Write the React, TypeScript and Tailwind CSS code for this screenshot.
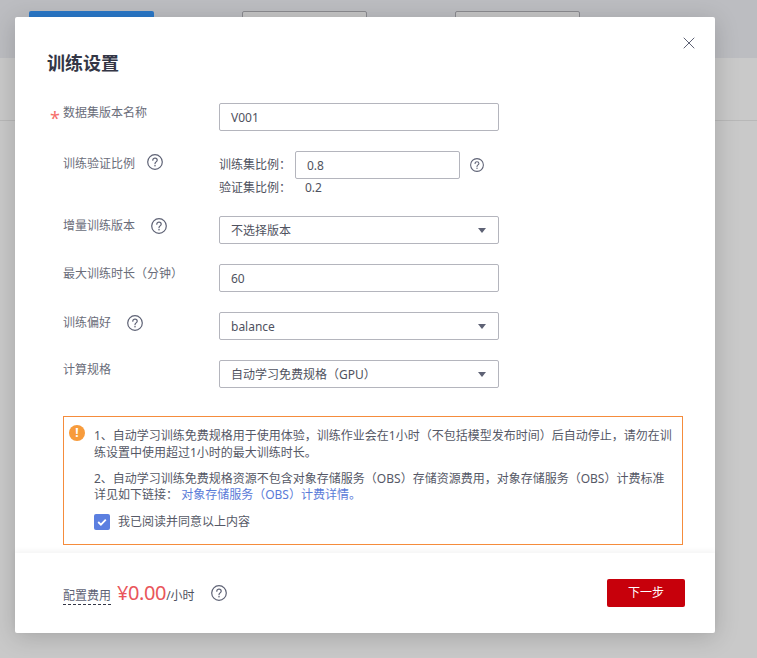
import { X } from 'lucide-react';

const fontStack = "font-['Noto_Sans','Noto_Sans_CJK_SC',sans-serif]";

const HelpIcon = ({ size = 16, className = '' }: { size?: number; className?: string }) => (
  <svg width={size} height={size} viewBox="0 0 16 16" fill="none" className={`text-[#5e6275] ${className}`}>
    <circle cx="8" cy="8" r="7.3" stroke="currentColor" strokeWidth="1.2" />
    <path d="M5.8 6.2C5.8 5 6.8 4.2 8 4.2s2.2.8 2.2 2c0 1.7-2.2 1.7-2.2 3.5" stroke="currentColor" strokeWidth="1.2" strokeLinecap="round" />
    <circle cx="8" cy="11.7" r="0.8" fill="currentColor" />
  </svg>
);

const Field = ({ value, className = 'w-[280px]' }: { value: string; className?: string }) => (
  <div className={`h-7 flex items-center pt-[2px] px-[11px] border border-[#b4b5bd] rounded-[2px] text-xs text-[#4f5260] ${className}`}>
    {value}
  </div>
);

const Select = ({ value }: { value: string }) => (
  <div className="w-[280px] h-7 flex items-center justify-between pl-[11px] pr-[12px] border border-[#b4b5bd] rounded-[2px] text-xs text-[#4f5260]">
    <span className="mt-[2px]">{value}</span>
    <span className="w-0 h-0 border-l-[4px] border-r-[4px] border-t-[5px] border-l-transparent border-r-transparent border-t-[#5e6275]" />
  </div>
);

const App = () => {
  return (
    <div className={`relative w-[757px] h-[658px] overflow-hidden bg-[#c9c9c9] ${fontStack}`}>
      {/* page behind the overlay */}
      <div className="h-[58px] bg-[#bcbdc1] flex pl-[29px] pt-[11px]">
        <div className="w-[125px] h-7 bg-[#2a78c8] rounded-[2px]" />
        <div className="ml-[88px] w-[125px] h-7 bg-[#c6c6c6] border border-[#8b8b90] rounded-[2px]" />
        <div className="ml-[88px] w-[125px] h-7 bg-[#c6c6c6] border border-[#8b8b90] rounded-[2px]" />
      </div>
      <div className="h-[63px] border-b border-[#b8b8b8]" />

      {/* dialog */}
      <div className="absolute left-[15px] top-[17px] w-[700px] h-[616px] bg-white rounded-[2px] shadow-[0_4px_24px_rgba(0,0,0,0.18)] flex flex-col">
        <X className="absolute right-[16px] top-[16px] text-[#5e6275]" size={20} strokeWidth={1.2} />
        <div className="flex-1 pl-[48px] pr-[32px]">
          <h2 className="pt-[32px] -ml-[16px] text-[18px] leading-[28px] font-bold text-[#333645]">训练设置</h2>

          <div className="mt-[26px] flex flex-col gap-5">
            <div className="relative flex">
              <span className="absolute -left-[13px] top-[3px] text-[18px] leading-[24px] text-[#f66f6a]">*</span>
              <div className="w-[156px] text-xs text-[#6a6d7a] leading-[20px]">数据集版本名称</div>
              <Field value="V001" />
            </div>

            <div className="flex">
              <div className="w-[156px] flex items-start gap-[12px] text-xs text-[#6a6d7a] leading-[20px] pt-[3px]">
                <span>训练验证比例</span>
                <HelpIcon />
              </div>
              <div className="text-xs text-[#4f5260]">
                <div className="flex items-center">
                  <span className="w-[76px] -mt-[1px]">训练集比例：</span>
                  <Field value="0.8" className="w-[165px]" />
                  <HelpIcon className="ml-[10px]" size={14} />
                </div>
                <div className="flex items-center mt-[1px] h-[16px]">
                  <span className="w-[86px]">验证集比例：</span>
                  <span>0.2</span>
                </div>
              </div>
            </div>

            <div className="flex">
              <div className="w-[156px] flex items-start gap-[16px] text-xs text-[#6a6d7a] leading-[20px]">
                <span>增量训练版本</span>
                <HelpIcon className="mt-[2px]" />
              </div>
              <Select value="不选择版本" />
            </div>

            <div className="flex">
              <div className="w-[156px] text-xs text-[#6a6d7a] leading-[20px]">最大训练时长（分钟）</div>
              <Field value="60" />
            </div>

            <div className="flex">
              <div className="w-[156px] flex items-start gap-[16px] text-xs text-[#6a6d7a] leading-[20px] pt-[1px]">
                <span>训练偏好</span>
                <HelpIcon className="mt-[2px]" />
              </div>
              <Select value="balance" />
            </div>

            <div className="flex">
              <div className="w-[156px] text-xs text-[#6a6d7a] leading-[20px]">计算规格</div>
              <Select value="自动学习免费规格（GPU）" />
            </div>
          </div>

          <div className="mt-[28px] h-[129px] border border-[#f58c3c] relative pl-[30px] pr-[9px] pt-[10px] text-xs text-[#555866] leading-[17px]">
            <span className="absolute left-[5px] top-[8px] w-4 h-4 rounded-full bg-[#f79b3c] text-white text-[12px] leading-4 font-bold text-center">!</span>
            <p>1、自动学习训练免费规格用于使用体验，训练作业会在1小时（不包括模型发布时间）后自动停止，请勿在训练设置中使用超过1小时的最大训练时长。</p>
            <p className="mt-[10px] leading-[16px]">2、自动学习训练免费规格资源不包含对象存储服务（OBS）存储资源费用，对象存储服务（OBS）计费标准</p>
            <p className="leading-[16px]">
              详见如下链接： <span className="text-[#5a7bd8]">对象存储服务（OBS）计费详情。</span>
            </p>
            <div className="mt-[10px] flex items-center gap-2">
              <span className="w-4 h-4 rounded-[2px] bg-[#5b7fe0] flex items-center justify-center">
                <svg width="12" height="12" viewBox="0 0 12 12" fill="none">
                  <path d="M2.2 6l2.7 2.7 4.9-5" stroke="white" strokeWidth="1.8" />
                </svg>
              </span>
              <span>我已阅读并同意以上内容</span>
            </div>
          </div>
        </div>

        <div className="h-[80px] shrink-0 flex items-center justify-between pl-[48px] pr-[30px] shadow-[0_-2px_6px_rgba(0,0,0,0.05)]">
          <div className="flex items-center">
            <span className="text-xs text-[#5e6275] border-b border-dashed border-[#333645] mt-[6px]">配置费用</span>
            <span className="ml-[6px] -mt-[1px] text-[20px] leading-[24px] tracking-[-0.4px] text-[#e9555a]">¥0.00</span>
            <span className="text-xs text-[#4f5260] mt-[6px]">/小时</span>
            <HelpIcon className="ml-[16px]" />
          </div>
          <button className="w-[78px] h-7 rounded-[2px] bg-[#c7000b] text-white text-xs">下一步</button>
        </div>
      </div>
    </div>
  );
};

export default App;
